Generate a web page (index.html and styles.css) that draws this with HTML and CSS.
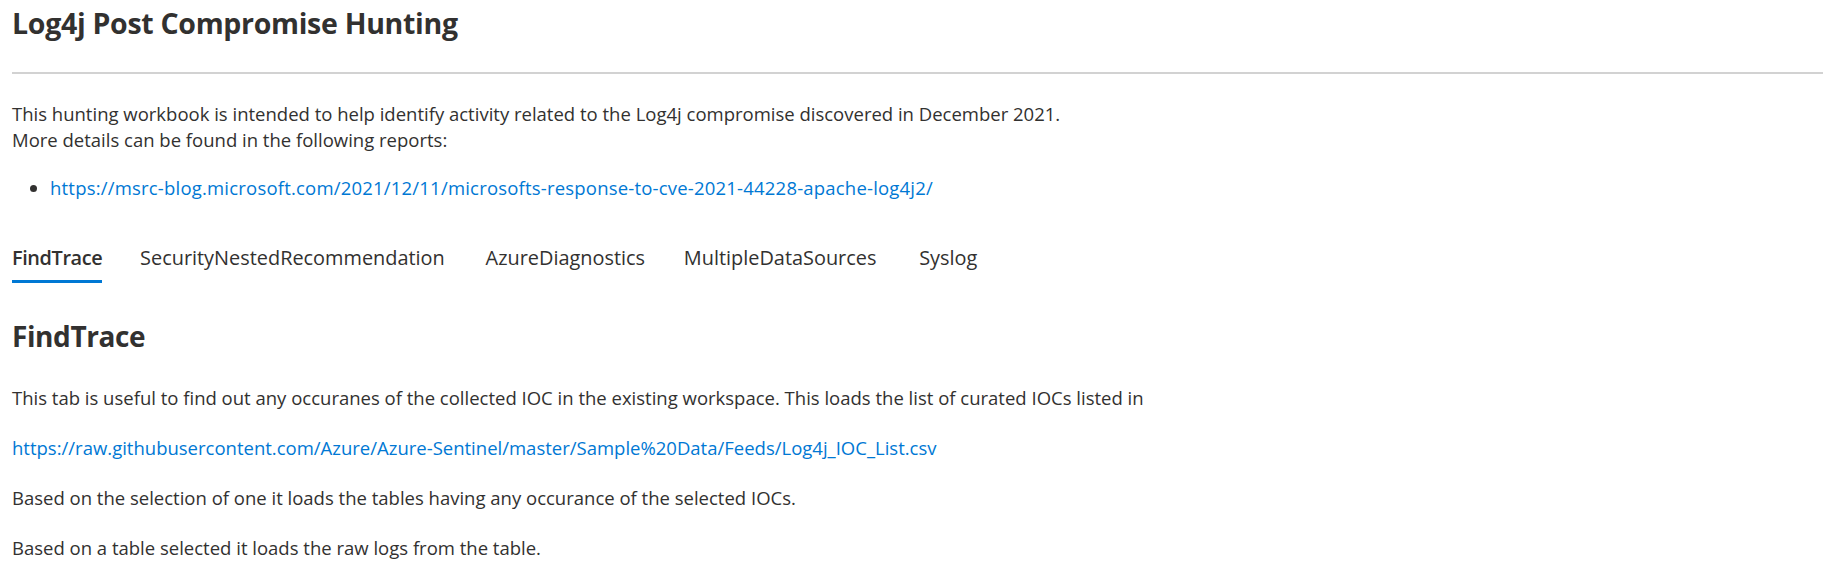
FILE: index.html
```html
<!DOCTYPE html>
<html lang="en">
<head>
<meta charset="utf-8">
<title>Log4j Post Compromise Hunting</title>
<link rel="stylesheet" href="styles.css">
</head>
<body>
<div class="page">
  <h1 class="title">Log4j Post Compromise Hunting</h1>
  <hr class="rule">
  <p class="intro">This hunting workbook is intended to help identify activity related to the Log4j compromise discovered in December 2021.<br>More details can be found in the following reports:</p>
  <ul class="reports">
    <li><a class="link" href="#">https://msrc-blog.microsoft.com/2021/12/11/microsofts-response-to-cve-2021-44228-apache-log4j2/</a></li>
  </ul>
  <nav class="tabs">
    <div class="tab tab-active"><span class="tab-label" data-label="FindTrace">FindTrace</span></div>
    <div class="tab"><span class="tab-label" data-label="SecurityNestedRecommendation">SecurityNestedRecommendation</span></div>
    <div class="tab"><span class="tab-label" data-label="AzureDiagnostics">AzureDiagnostics</span></div>
    <div class="tab"><span class="tab-label" data-label="MultipleDataSources">MultipleDataSources</span></div>
    <div class="tab tab-last"><span class="tab-label" data-label="Syslog">Syslog</span></div>
  </nav>
  <h2 class="section-title">FindTrace</h2>
  <p class="text">This tab is useful to find out any occuranes of the collected IOC in the existing workspace. This loads the list of curated IOCs listed in</p>
  <p class="text"><a class="link" href="#">https://raw.githubusercontent.com/Azure/Azure-Sentinel/master/Sample%20Data/Feeds/Log4j_IOC_List.csv</a></p>
  <p class="text">Based on the selection of one it loads the tables having any occurance of the selected IOCs.</p>
  <p class="text">Based on a table selected it loads the raw logs from the table.</p>
</div>
</body>
</html>
```

FILE: styles.css
```css
html, body {
  margin: 0;
  padding: 0;
  background: #ffffff;
}

body {
  font-family: "Open Sans", "Noto Sans", sans-serif;
  color: #323130;
  font-size: 18.5px;
  line-height: 26px;
}

.page {
  padding: 0 15px 0 12px;
}

.title {
  margin: 5px 0 0 0;
  font-size: 28.5px;
  line-height: 36px;
  font-weight: 700;
  letter-spacing: -0.3px;
}

.rule {
  margin: 31px 0 0 0;
  border: 0;
  height: 2px;
  background: #d2d2d2;
}

.intro {
  margin: 27px 0 0 0;
}

.reports {
  margin: 22px 0 0 0;
  padding-left: 38px;
}

.reports .link {
  letter-spacing: 0.2px;
}

.link {
  color: #0078d4;
  text-decoration: none;
}

.tabs {
  display: flex;
  align-items: flex-start;
  gap: 32px;
  margin-top: 44px;
}

.tab {
  font-size: 19.9px;
  line-height: 26px;
  text-align: center;
}

.tab-last {
  margin-left: 6px;
}

.tab-label {
  display: block;
  padding-bottom: 9px;
  border-bottom: 3px solid transparent;
}

/* reserve the width of the bold label so tabs do not shift on selection */
.tab-label::before {
  content: attr(data-label);
  display: block;
  height: 0;
  overflow: hidden;
  visibility: hidden;
  font-weight: 600;
}

.tab-active .tab-label {
  border-bottom-color: #0078d4;
  font-weight: 600;
  letter-spacing: -0.4px;
}

.tab-active .tab-label::before {
  letter-spacing: -0.4px;
}

.section-title {
  margin: 35px 0 0 0;
  font-size: 28px;
  line-height: 36px;
  font-weight: 700;
  letter-spacing: -0.4px;
}

.text {
  margin: 31px 0 0 0;
}

.text + .text {
  margin-top: 24px;
}
```
